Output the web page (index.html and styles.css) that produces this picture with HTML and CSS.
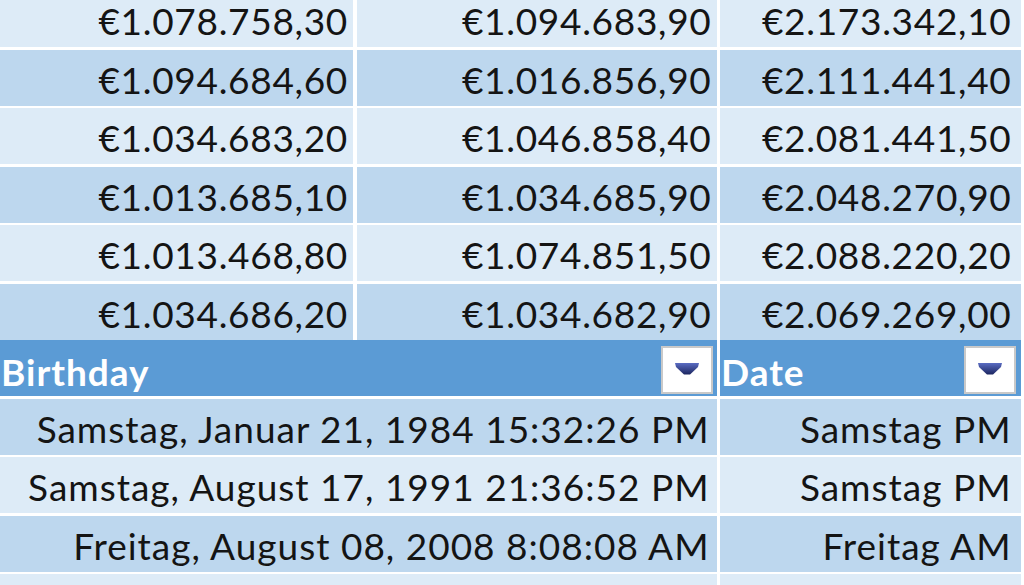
FILE: index.html
```html
<!DOCTYPE html>
<html lang="de">
<head>
<meta charset="utf-8">
<title>Tabelle</title>
<link rel="stylesheet" href="styles.css">
</head>
<body>
<div class="sheet">
  <div class="table money">
    <div class="row light"><div class="cell c1">€1.078.758,30</div><div class="cell c2">€1.094.683,90</div><div class="cell c3">€2.173.342,10</div></div>
    <div class="row dark"><div class="cell c1">€1.094.684,60</div><div class="cell c2">€1.016.856,90</div><div class="cell c3">€2.111.441,40</div></div>
    <div class="row light"><div class="cell c1">€1.034.683,20</div><div class="cell c2">€1.046.858,40</div><div class="cell c3">€2.081.441,50</div></div>
    <div class="row dark"><div class="cell c1">€1.013.685,10</div><div class="cell c2">€1.034.685,90</div><div class="cell c3">€2.048.270,90</div></div>
    <div class="row light"><div class="cell c1">€1.013.468,80</div><div class="cell c2">€1.074.851,50</div><div class="cell c3">€2.088.220,20</div></div>
    <div class="row dark"><div class="cell c1">€1.034.686,20</div><div class="cell c2">€1.034.682,90</div><div class="cell c3">€2.069.269,00</div></div>
  </div>
  <div class="table dates">
    <div class="row head">
      <div class="cell hcell wide"><span class="htext">Birthday</span><span class="filter"><svg viewBox="0 0 24 12" width="24" height="12"><defs><linearGradient id="g1" x1="0" y1="0" x2="0" y2="1"><stop offset="0" stop-color="#5a6cc2"/><stop offset="1" stop-color="#1c2660"/></linearGradient></defs><polygon points="0,0 24,0 23,4 15,11.5 9,11.5 1,4" fill="url(#g1)"/></svg></span></div>
      <div class="cell hcell c3"><span class="htext">Date</span><span class="filter"><svg viewBox="0 0 24 12" width="24" height="12"><polygon points="0,0 24,0 23,4 15,11.5 9,11.5 1,4" fill="url(#g1)"/></svg></span></div>
    </div>
    <div class="row dark"><div class="cell wide">Samstag, Januar 21, 1984 15:32:26 PM</div><div class="cell c3">Samstag PM</div></div>
    <div class="row light"><div class="cell wide">Samstag, August 17, 1991 21:36:52 PM</div><div class="cell c3">Samstag PM</div></div>
    <div class="row dark"><div class="cell wide">Freitag, August 08, 2008 8:08:08 AM</div><div class="cell c3">Freitag AM</div></div>
    <div class="row light"><div class="cell wide"></div><div class="cell c3"></div></div>
  </div>
</div>
</body>
</html>
```

FILE: styles.css
```css
html, body {
  margin: 0;
  padding: 0;
  background: #ffffff;
  overflow: hidden;
}

body {
  width: 1024px;
  height: 585px;
  font-family: "Lato", "Liberation Sans", sans-serif;
  color: #141414;
}

.sheet {
  margin-top: -9px;
  display: flex;
  flex-direction: column;
}

.table {
  display: flex;
  flex-direction: column;
  row-gap: 2.6px;
  width: 1021px;
}

.money .row {
  display: grid;
  grid-template-columns: 353px 360px 300.5px;
  column-gap: 3.5px;
}

.dates .row {
  display: grid;
  grid-template-columns: 716.5px 300.5px;
  column-gap: 3.5px;
}

.cell {
  height: 56px;
  box-sizing: border-box;
  display: flex;
  align-items: flex-end;
  justify-content: flex-end;
  font-size: 37px;
  line-height: 42px;
  padding: 0 5px 5px 0;
  white-space: nowrap;
}

.money .cell {
  letter-spacing: 0.7px;
}

.dates .cell {
  letter-spacing: 1px;
}

.cell.c3 {
  padding-right: 9px;
}

.cell.wide {
  padding-right: 7px;
}

.light .cell {
  background: #ddebf7;
}

.dark .cell {
  background: #bdd7ee;
}

.head .cell {
  background: #5b9bd5;
}

.cell.hcell {
  justify-content: space-between;
  padding: 0 4px 0 0;
  color: #ffffff;
  font-weight: 700;
}

.cell.hcell.c3 {
  padding-right: 5px;
}

.htext {
  padding-left: 1px;
  padding-bottom: 3px;
}

.filter {
  width: 52px;
  height: 48px;
  box-sizing: border-box;
  margin-bottom: 2px;
  background: #ffffff;
  border: 2px solid #c9c9c9;
  display: flex;
  align-items: center;
  justify-content: center;
  letter-spacing: 0;
}

.filter svg {
  display: block;
  margin-top: -2px;
}
```
